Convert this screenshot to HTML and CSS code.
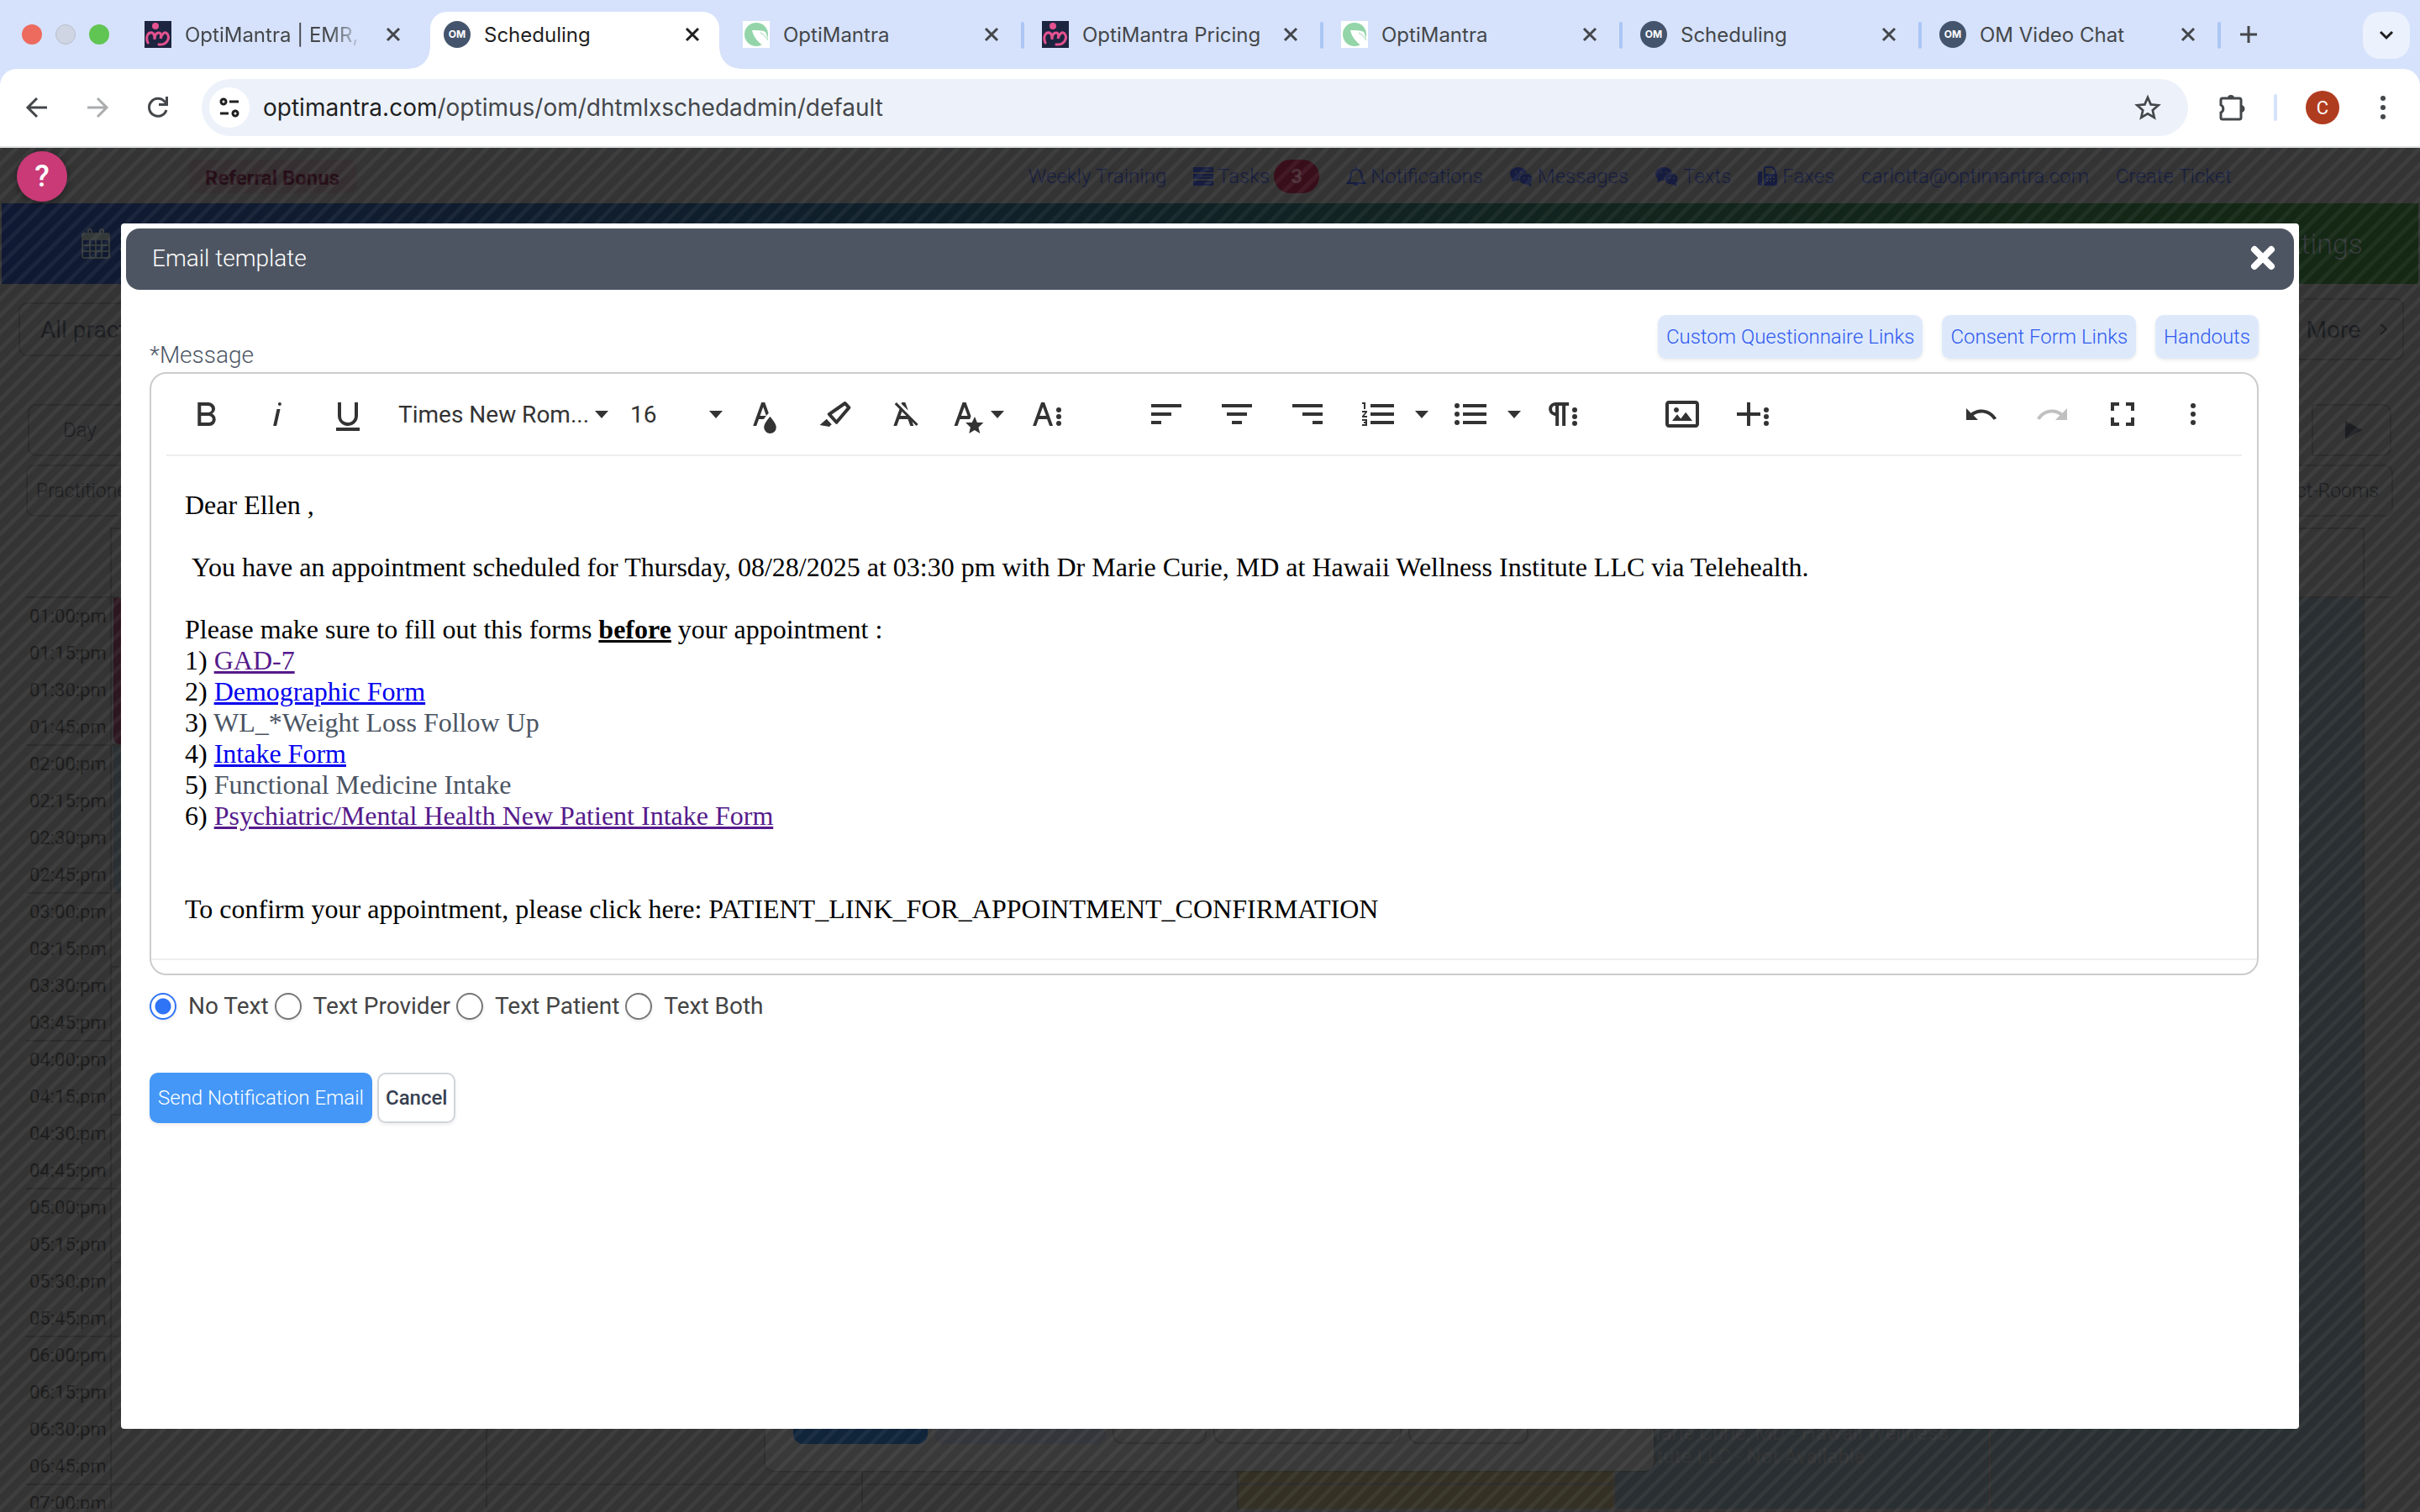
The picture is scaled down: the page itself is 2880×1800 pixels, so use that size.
FILE: index.html
```html
<!DOCTYPE html>
<html lang="en">
<head>
  <meta charset="UTF-8">
  <title>Scheduling</title>
  <link rel="stylesheet" href="styles.css">
</head>
<body>
  <!-- Shared icons -->
  <svg class="sprite" aria-hidden="true">
    <symbol id="x" viewBox="0 0 24 24"><path d="M5 5l14 14M19 5L5 19" fill="none" stroke="currentColor" stroke-width="3"/></symbol>
    <symbol id="mantra" viewBox="0 0 32 32">
      <rect width="32" height="32" fill="#1d2440"/>
      <path d="M4 26c-3-7 0-13 5-12 3 1 3 4 3 8 0-5 1-8 5-8 3 0 3 4 2 7 2-6 5-9 8-6 4 6-1 14-10 13" fill="none" stroke="#e4528f" stroke-width="3" stroke-linecap="round"/>
      <circle cx="13" cy="6" r="4" fill="#e4528f"/>
    </symbol>
    <symbol id="leaf" viewBox="0 0 32 32">
      <rect width="32" height="32" fill="#fff"/>
      <circle cx="16" cy="16" r="14" fill="#93d5a9"/>
      <path d="M11 11c6 0 12 0 16 2 2 4 3 9 2 13l-3 5c-7-5-13-11-15-20z" fill="#fff"/>
      <path d="M21 14c4 2 7 5 9 9" stroke="#93d5a9" stroke-width="1" fill="none"/>
    </symbol>
    <symbol id="chat" viewBox="0 0 28 24">
      <ellipse cx="10" cy="9" rx="10" ry="8"/><path d="M3 13l-1 6 7-3z"/>
      <ellipse cx="19" cy="15" rx="8" ry="7" stroke="#343434" stroke-width="1"/><path d="M24 19l2 5-7-3z"/>
      <circle cx="7" cy="7" r="1" fill="#343434"/><circle cx="13" cy="7" r="1" fill="#343434"/>
      <circle cx="17" cy="14" r="1" fill="#343434"/><circle cx="22" cy="14" r="1" fill="#343434"/>
    </symbol>
  </svg>

  <!-- Browser tabs -->
  <div class="tab-strip">
    <div class="lights"><span class="light red"></span><span class="light gray"></span><span class="light green"></span></div>
    <div class="tab"><svg class="favicon"><use href="#mantra"/></svg><span class="tab-title fade">OptiMantra | EMR, C</span><button class="tab-close" aria-label="Close tab"><svg><use href="#x"/></svg></button></div>
    <div class="tab active"><span class="favicon om">OM</span><span class="tab-title">Scheduling</span><button class="tab-close" aria-label="Close tab"><svg><use href="#x"/></svg></button></div>
    <div class="tab line"><svg class="favicon"><use href="#leaf"/></svg><span class="tab-title">OptiMantra</span><button class="tab-close" aria-label="Close tab"><svg><use href="#x"/></svg></button></div>
    <div class="tab line"><svg class="favicon"><use href="#mantra"/></svg><span class="tab-title">OptiMantra Pricing</span><button class="tab-close" aria-label="Close tab"><svg><use href="#x"/></svg></button></div>
    <div class="tab line"><svg class="favicon"><use href="#leaf"/></svg><span class="tab-title">OptiMantra</span><button class="tab-close" aria-label="Close tab"><svg><use href="#x"/></svg></button></div>
    <div class="tab line"><span class="favicon om">OM</span><span class="tab-title">Scheduling</span><button class="tab-close" aria-label="Close tab"><svg><use href="#x"/></svg></button></div>
    <div class="tab line"><span class="favicon om">OM</span><span class="tab-title">OM Video Chat</span><button class="tab-close" aria-label="Close tab"><svg><use href="#x"/></svg></button></div>
    <button class="new-tab" aria-label="New tab"><svg viewBox="0 0 24 24"><path d="M12 2v20M2 12h20" stroke="currentColor" stroke-width="3"/></svg></button>
    <button class="tab-search" aria-label="Search tabs"><svg viewBox="0 0 20 20"><path d="M3 6l7 7 7-7" fill="none" stroke="currentColor" stroke-width="3"/></svg></button>
  </div>

  <!-- Address bar -->
  <div class="toolbar">
    <div class="nav-btns">
      <button aria-label="Back"><svg viewBox="0 0 32 32"><path d="M28 16H5M16 5L5 16l11 11" fill="none" stroke="currentColor" stroke-width="3"/></svg></button>
      <button class="off" aria-label="Forward"><svg viewBox="0 0 32 32"><path d="M4 16h23M16 5l11 11-11 11" fill="none" stroke="currentColor" stroke-width="3"/></svg></button>
      <button aria-label="Reload"><svg viewBox="0 0 32 32"><path d="M26 19a10.500 10.500 0 1 1-2-10l3 3" fill="none" stroke="currentColor" stroke-width="3"/><path d="M28 3v11H17v-3h8V3z" fill="currentColor"/></svg></button>
    </div>
    <div class="omnibox">
      <button class="site-info" aria-label="Site information"><svg viewBox="0 0 28 28"><g fill="none" stroke="currentColor" stroke-width="3"><circle cx="7" cy="7" r="3"/><path d="M14 7h11M3 21h10"/><circle cx="21" cy="21" r="3"/></g></svg></button>
      <span class="url"><b>optimantra.com</b>/optimus/om/dhtmlxschedadmin/default</span>
      <button class="star" aria-label="Bookmark"><svg viewBox="0 0 32 32"><path d="M16 4l3.600 8.400 9 .8-6.800 6 2 8.800-7.800-4.700L8.200 28l2-8.800-6.800-6 9-.8z" fill="none" stroke="currentColor" stroke-width="2.700"/></svg></button>
    </div>
    <button class="ext" aria-label="Extensions"><svg viewBox="0 0 36 36"><path d="M5 9q0-2 2-2h20q2 0 2 2v21q0 2-2 2H7q-2 0-2-2v-6a5 5 0 0 0 0-9z" fill="none" stroke="currentColor" stroke-width="3"/><path d="M13 7a4 4 0 0 1 8 0zM29 15a4 4 0 0 1 0 9z" fill="currentColor"/></svg></button>
    <span class="tool-line"></span>
    <button class="avatar">C</button>
    <button class="menu" aria-label="Menu"><svg viewBox="0 0 8 32"><circle cx="4" cy="5" r="3"/><circle cx="4" cy="16" r="3"/><circle cx="4" cy="27" r="3"/></svg></button>
  </div>

  <div class="page">
    <!-- Top links -->
    <div class="top-links">
      <a class="referral" href="#">Referral Bonus</a>
      <a href="#">Weekly Training</a>
      <a href="#"><svg viewBox="0 0 24 24"><path d="M0 1h24v6H0zM0 9h24v6H0zM0 17h24v6H0z"/><path d="M15 4h7M8 12h14M13 20h9" stroke="#343434" stroke-width="1"/></svg>Tasks<span class="count">3</span></a>
      <a href="#"><svg viewBox="0 0 24 24"><path d="M2 20c4-4 3-8 4-12 1-3 3-4 6-4s5 1 6 4c1 4 0 8 4 12zM12 4V1" fill="none" stroke="currentColor" stroke-width="2"/><path d="M9 21h6c-1 3-5 3-6 0z"/></svg>Notifications</a>
      <a href="#"><svg class="wide"><use href="#chat"/></svg>Messages</a>
      <a href="#"><svg class="wide"><use href="#chat"/></svg>Texts</a>
      <a href="#"><svg viewBox="0 0 24 24"><path d="M0 6h5v17H2q-2 0-2-2z"/><path d="M8 10V1h9l4 4v5" fill="none" stroke="currentColor" stroke-width="2"/><path d="M7 9h16v12q0 2-2 2H7z"/><path d="M10 13h10M10 17h10" stroke="#343434" stroke-width="2" stroke-dasharray="2 2"/></svg>Faxes</a>
      <a href="#">carlotta@optimantra.com</a>
      <a href="#">Create Ticket</a>
    </div>

    <nav class="main-nav">
      <a href="#"><svg viewBox="0 0 34 36"><path d="M2 6h30v8H2z"/><g fill="none" stroke="currentColor" stroke-width="2"><rect x="1" y="6" width="32" height="29" rx="2"/><path d="M1 20h32M1 27h32M10 13v22M17 13v22M24 13v22"/><rect x="8" y="1" width="4" height="9" rx="2"/><rect x="22" y="1" width="4" height="9" rx="2"/></g></svg>Schedule</a>
      <a href="#">Settings</a>
    </nav>

    <div class="filter-row">
      <div class="box practice">All practitioners</div>
      <div class="box more">More <svg viewBox="0 0 12 20"><path d="M2 4l7 6-7 6" fill="none" stroke="currentColor" stroke-width="2"/></svg></div>
    </div>
    <div class="view-row">
      <button class="box day">Day</button>
      <button class="box next" aria-label="Next"><svg viewBox="0 0 20 22"><path d="M0 0l20 11L0 22z"/></svg></button>
    </div>
    <div class="resource-row">
      <button class="box">Practitioners</button>
      <button class="box">Pract-Rooms</button>
    </div>

    <!-- Scheduler grid -->
    <div class="scheduler">
      <div class="sched-head"></div>
      <div class="sched-body">
        <div class="times">
          <span>01:00:pm</span><span>01:15:pm</span><span>01:30:pm</span><span>01:45:pm</span>
          <span>02:00:pm</span><span>02:15:pm</span><span>02:30:pm</span><span>02:45:pm</span>
          <span>03:00:pm</span><span>03:15:pm</span><span>03:30:pm</span><span>03:45:pm</span>
          <span>04:00:pm</span><span>04:15:pm</span><span>04:30:pm</span><span>04:45:pm</span>
          <span>05:00:pm</span><span>05:15:pm</span><span>05:30:pm</span><span>05:45:pm</span>
          <span>06:00:pm</span><span>06:15:pm</span><span>06:30:pm</span><span>06:45:pm</span>
          <span>07:00:pm</span>
        </div>
        <div class="col"><div class="event booked"></div><div class="event open"></div></div>
        <div class="col"></div>
        <div class="col"></div>
        <div class="col gold"></div>
        <div class="col blocked"><p class="note">Dr Marie Curie, MD - Hawaii Wellness<br>Institute LLC - Not Available</p></div>
        <div class="col blocked"></div>
      </div>
    </div>

    <!-- Appointment popup, behind the dialog -->
    <div class="popup">
      <span class="pop-btn save"></span><span class="pop-btn soft"></span><span class="pop-btn p1"></span><span class="pop-btn p2"></span><span class="pop-btn p3"></span>
    </div>

    <div class="overlay"></div>
    <button class="help">?</button>

    <!-- Email template dialog -->
    <div class="dialog" role="dialog" aria-labelledby="dialogTitle">
      <div class="dialog-title">
        <span id="dialogTitle">Email template</span>
        <button class="dialog-close" aria-label="Close"><svg viewBox="0 0 30 30"><path d="M5 5l20 20M25 5L5 25" stroke="#fff" stroke-width="8" stroke-linecap="round"/></svg></button>
      </div>
      <div class="dialog-body">
        <div class="message-head">
          <span class="message-label" id="messageLabel">*Message</span>
          <div class="link-buttons">
            <button>Custom Questionnaire Links</button>
            <button>Consent Form Links</button>
            <button>Handouts</button>
          </div>
        </div>

        <div class="editor">
          <div class="editor-tools">
            <button aria-label="Bold"><svg viewBox="0 0 24 24"><path d="M15.250,11.800h0A3.680,3.680,0,0,0,17,9a3.930,3.930,0,0,0-3.860-4H6.650V19h7a3.740,3.740,0,0,0,3.700-3.780V15.100A3.640,3.640,0,0,0,15.250,11.800ZM8.650,7h4.200a2.090,2.090,0,0,1,2,1.300,2.090,2.090,0,0,1-1.370,2.610,2.230,2.230,0,0,1-.63.09H8.650Zm4.600,10H8.650V13h4.600a2.090,2.090,0,0,1,2,1.300,2.090,2.090,0,0,1-1.370,2.610A2.230,2.230,0,0,1,13.250,17Z"/></svg></button>
            <button aria-label="Italic"><svg viewBox="0 0 24 24"><path d="M11.760,9h2l-2.200,10h-2Zm1.680-4a1,1,0,1,0,1,1,1,1,0,0,0-1-1Z"/></svg></button>
            <button aria-label="Underline"><svg viewBox="0 0 24 24"><path d="M19,20v2H5V20Zm-3-6.785a4,4,0,0,1-5.740,3.400A3.750,3.750,0,0,1,8,13.085V5.005H6v8.210a6,6,0,0,0,8,5.440,5.851,5.851,0,0,0,4-5.650v-8H16Z"/></svg></button>
            <label class="pick family"><select aria-label="Font family"><option>Times New Rom...</option></select><i class="caret"></i></label>
            <label class="pick size"><select aria-label="Font size"><option>16</option></select><i class="caret"></i></label>
            <button aria-label="Text color"><svg viewBox="0 0 24 24"><path d="M15.200,13.494s-3.600,3.900-3.600,6.300a3.650,3.650,0,0,0,7.300.1v-.1C18.900,17.394,15.200,13.494,15.200,13.494Zm-1.470-1.357.669-.724L12.100,5h-2l-5,14h2l1.430-4h2.943A24.426,24.426,0,0,1,13.726,12.137ZM11.100,7.800l1.860,5.200H9.244Z"/></svg></button>
            <button aria-label="Background color"><svg viewBox="0 0 24 24"><path d="M9.918,12.241l7.748-5.390,1.179,1.296-6.094,7.207L9.918,12.241M7.587,12.652l4.535,4.983a.934.934,0,0,0,1.395-.091L20.969,8.731A.908.908,0,0,0,20.991,7.533l-2.513-2.761a.908.908,0,0,0-1.195-.091L7.809,11.271A.934.934,0,0,0,7.587,12.652ZM2.794,18.528,8.411,19.500l1.479-1.346-3.029-3.328Z"/></svg></button>
            <button aria-label="Clear formatting"><svg viewBox="0 0 24 24"><path d="M11.480,10.090l-1.200-1.210L8.800,7.410,6.430,5,5.370,6.100,8.250,9,4.660,19h2l1.430-4h5.140l1.430,4h2l-.89-2.510L18.270,19l1.070-1.060L14.590,13.200ZM8.800,13l.92-2.560L12.270,13Zm.56-7.150L9.660,5h2l1.750,4.900Z"/></svg></button>
            <button class="styles" aria-label="Inline style"><svg viewBox="0 0 24 24"><path d="M11.880,15h.7l.7-1.700-3-8.300h-2l-5,14h2l1.400-4Zm-4.400-2,1.900-5.200,1.900,5.200ZM15.400,21.545l3.246,1.949-.909-3.637L20.720,17H16.954l-1.429-3.506L13.837,17H10.071l2.857,2.857-.779,3.637Z"/></svg><i class="caret"></i></button>
            <button aria-label="More text"><svg viewBox="0 0 24 24"><path d="M13.550,19h2l-5-14h-2l-5,14h2l1.400-4h5.100Zm-5.900-6,1.900-5.200,1.900,5.200Z"/><circle cx="19" cy="9.500" r="1.500"/><circle cx="19" cy="13.500" r="1.500"/><circle cx="19" cy="17.500" r="1.500"/></svg></button>
            <span class="tools-gap"></span>
            <button aria-label="Align left"><svg viewBox="0 0 24 24"><path d="M3,8H21V6H3Zm0,10H9V16H3Zm0-5H15V11H3Z"/></svg></button>
            <button aria-label="Align center"><svg viewBox="0 0 24 24"><path d="M3,8H21V6H3Zm6,10h6V16H9Zm-3-5H18V11H6Z"/></svg></button>
            <button aria-label="Align right"><svg viewBox="0 0 24 24"><path d="M3,8H21V6H3Zm12,10h6V16H15Zm-6-5H21V11H9Z"/></svg></button>
            <button class="list" aria-label="Ordered list"><svg viewBox="0 0 24 24"><path d="M2.500,16h2v.5h-1v1h1V18h-2v1h3V15h-3Zm1-7h1V5h-2V6h1Zm-1,2H4.300L2.500,13.100V14h3V13H3.700l1.800-2.100V10h-3Zm5-5V8h14V6Zm0,12h14V16H7.500Zm0-5h14V11H7.500Z"/></svg><i class="caret"></i></button>
            <button class="list" aria-label="Unordered list"><svg viewBox="0 0 24 24"><circle cx="4" cy="7" r="1.500"/><circle cx="4" cy="12" r="1.500"/><circle cx="4" cy="17" r="1.500"/><path d="M7.500,6V8h14V6Zm0,12h14V16H7.500Zm0-5h14V11H7.500Z"/></svg><i class="caret"></i></button>
            <button aria-label="More paragraph"><svg viewBox="0 0 24 24"><path d="M7.682,5a4.110,4.110,0,0,0-4.070,3.180,4,4,0,0,0,3.110,4.725h0l.027.005a3.766,3.766,0,0,0,.82.09v6h2V7h2V19h2V7h2V5ZM5.532,9a2,2,0,0,1,2-2v4A2,2,0,0,1,5.532,9Z"/><circle cx="19" cy="9.500" r="1.500"/><circle cx="19" cy="13.500" r="1.500"/><circle cx="19" cy="17.500" r="1.500"/></svg></button>
            <span class="tools-gap"></span>
            <button aria-label="Insert image"><svg viewBox="0 0 24 24"><path d="M14.200,11l3.800,5H6l3-3.900l2.100,2.700L14,11H14.200z M8.500,11c0.800,0,1.500-0.700,1.500-1.500S9.300,8,8.500,8S7,8.700,7,9.500C7,10.300,7.700,11,8.500,11z M22,6v12c0,1.100-0.900,2-2,2H4c-1.100,0-2-0.900-2-2V6c0-1.100,0.900-2,2-2h16C21.100,4,22,4.900,22,6z M20,8.800V6H4v12h16V8.800z"/></svg></button>
            <button aria-label="More rich"><svg viewBox="0 0 24 24"><path d="M16.500,13h-6v6h-2V13h-6V11h6V5h2v6h6Z"/><circle cx="20" cy="9.500" r="1.500"/><circle cx="20" cy="13.500" r="1.500"/><circle cx="20" cy="17.500" r="1.500"/></svg></button>
            <button class="undo" aria-label="Undo"><svg viewBox="0 0 24 24"><path d="M10.400,9.400c-1.700,0.300-3.200,0.900-4.600,2L3,8.500v7h7l-2.700-2.700c3.700-2.600,8.800-1.800,11.500,1.900c0.200,0.200,0.300,0.500,0.500,0.700l1.800-0.900C18.700,10.800,14.600,8.700,10.400,9.400z"/></svg></button>
            <button class="disabled" aria-label="Redo"><svg viewBox="0 0 24 24"><path d="M13.600,9.400c1.700,0.300,3.200,0.900,4.600,2L21,8.500v7h-7l2.700-2.700C13,10.100,7.900,11,5.300,14.700c-0.200,0.200-0.300,0.500-0.500,0.700L3,14.500C5.300,10.800,9.400,8.700,13.600,9.400z"/></svg></button>
            <button aria-label="Fullscreen"><svg viewBox="0 0 24 24"><path d="M7,14H5v5h5V17H7ZM5,10H7V7h3V5H5Zm12,7H14v2h5V14H17ZM14,5V7h3v3h2V5Z"/></svg></button>
            <button aria-label="More misc"><svg viewBox="0 0 24 24"><circle cx="12" cy="7" r="1.500"/><circle cx="12" cy="12" r="1.500"/><circle cx="12" cy="17" r="1.500"/></svg></button>
          </div>
          <div class="editor-text" contenteditable="true" spellcheck="false" role="textbox" aria-labelledby="messageLabel">
            <p>Dear Ellen ,</p>
            <p>&nbsp;You have an appointment scheduled for Thursday, 08/28/2025 at 03:30 pm with Dr Marie Curie, MD at Hawaii Wellness Institute LLC via Telehealth.</p>
            <p>Please make sure to fill out this forms <b><u>before</u></b> your appointment :<br>
              1) <a class="visited" href="#">GAD-7</a><br>
              2) <a href="#">Demographic Form</a><br>
              3) <span class="plain">WL_*Weight Loss Follow Up</span><br>
              4) <a href="#">Intake Form</a><br>
              5) <span class="plain">Functional Medicine Intake</span><br>
              6) <a class="visited" href="#">Psychiatric/Mental Health New Patient Intake Form</a><br><br></p>
            <p>To confirm your appointment, please click here: PATIENT_LINK_FOR_APPOINTMENT_CONFIRMATION</p>
          </div>
          <div class="editor-foot"></div>
        </div>

        <div class="text-options">
          <input type="radio" name="text" id="noText" checked><label for="noText">No Text</label>
          <input type="radio" name="text" id="textProvider"><label for="textProvider">Text Provider</label>
          <input type="radio" name="text" id="textPatient"><label for="textPatient">Text Patient</label>
          <input type="radio" name="text" id="textBoth"><label for="textBoth">Text Both</label>
        </div>
        <div class="actions">
          <button class="send">Send Notification Email</button>
          <button class="cancel">Cancel</button>
        </div>
      </div>
    </div>
  </div>
</body>
</html>
```
FILE: styles.css
```css
* {
  box-sizing: border-box;
}
body {
  margin: 0;
  height: 100vh;
  display: flex;
  flex-direction: column;
  overflow: hidden;
  background: #d6e2fb;
  font-family: Roboto, "Liberation Sans", sans-serif;
}
button {
  font: inherit;
  color: inherit;
  border: 0;
  padding: 0;
  background: none;
  cursor: pointer;
}
a {
  text-decoration: none;
}
svg {
  display: block;
  fill: currentColor;
  flex: none;
}
.sprite {
  display: none;
}

/* Browser window */
.tab-strip {
  display: flex;
  align-items: center;
  height: 82px;
  font-family: Inter, sans-serif;
  font-size: 24px;
  color: #44474a;
}
.lights {
  display: flex;
  gap: 16px;
  width: 156px;
  padding-left: 26px;
}
.light {
  width: 24px;
  height: 24px;
  border-radius: 50%;
}
.red {
  background: #ec6a5e;
}
.gray {
  background: #cfd5e2;
  border: 1px solid #b9bfcc;
}
.green {
  background: #61c554;
}
.tab {
  position: relative;
  display: flex;
  align-items: center;
  width: 356px;
  height: 82px;
  padding: 0 32px 0 16px;
}
.line::after {
  content: "";
  position: absolute;
  right: 5px;
  top: 26px;
  width: 4px;
  height: 32px;
  border-radius: 2px;
  background: #abc6f5;
}
.active {
  width: 344px;
  height: 68px;
  margin: 14px 12px 0 0;
  padding: 0 20px 14px 16px;
  background: #fff;
  border-radius: 20px 20px 0 0;
  color: #1f1f1f;
}
.active::before,
.active::after {
  content: "";
  position: absolute;
  bottom: 0;
  width: 24px;
  height: 24px;
}
.active::before {
  right: 100%;
  background: radial-gradient(circle at 0 0, transparent 23px, #fff 24px);
}
.active::after {
  left: 100%;
  background: radial-gradient(circle at 100% 0, transparent 23px, #fff 24px);
}
.favicon {
  width: 32px;
  height: 32px;
  margin-right: 16px;
}
.om {
  border-radius: 50%;
  background: #44546c;
  color: #fff;
  font-size: 12px;
  font-weight: 700;
  line-height: 32px;
  text-align: center;
}
.tab-title {
  flex: 1;
  overflow: hidden;
  white-space: nowrap;
}
.fade {
  margin-right: 22px;
  -webkit-mask-image: linear-gradient(to right, #000 80%, transparent);
  mask-image: linear-gradient(to right, #000 80%, transparent);
}
.tab-close svg,
.new-tab svg {
  width: 24px;
  height: 24px;
}
.new-tab {
  margin-left: 16px;
}
.tab-search {
  display: grid;
  place-items: center;
  width: 56px;
  height: 56px;
  margin: 2px 12px 0 auto;
  border-radius: 20px;
  background: #ebf1fd;
  color: #1f1f1f;
}
.tab-search svg {
  width: 20px;
  height: 20px;
}
.toolbar {
  display: flex;
  align-items: center;
  height: 94px;
  padding: 0 40px 0 28px;
  background: #fff;
  border-bottom: 2px solid #dfe2e4;
  border-radius: 20px 20px 0 0;
  color: #44474a;
}
.nav-btns {
  display: flex;
  gap: 40px;
  margin-right: 36px;
}
.nav-btns svg,
.star svg {
  width: 32px;
  height: 32px;
}
.off {
  color: #aaacae;
}
.omnibox {
  display: flex;
  align-items: center;
  flex: 1;
  height: 68px;
  margin-right: 34px;
  padding: 0 32px 0 9px;
  border-radius: 34px;
  background: #edf2fa;
  font-family: Inter, sans-serif;
  font-size: 28px;
}
.site-info {
  display: grid;
  place-items: center;
  width: 48px;
  height: 48px;
  margin-right: 16px;
  border-radius: 50%;
  background: #fff;
  color: #1f1f1f;
}
.site-info svg {
  width: 28px;
  height: 28px;
}
.url {
  flex: 1;
}
.url b {
  font-weight: 400;
  color: #1f1f1f;
}
.ext svg {
  width: 36px;
  height: 36px;
}
.tool-line {
  width: 4px;
  height: 32px;
  margin: 0 34px 0 32px;
  border-radius: 2px;
  background: #d6e2fb;
}
.avatar {
  width: 40px;
  height: 40px;
  margin-right: 48px;
  border-radius: 50%;
  background: #b03c1f;
  color: #fff;
  font-size: 22px;
}
.menu svg {
  width: 8px;
  height: 32px;
}

/* Scheduling page under the overlay */
.page {
  position: relative;
  flex: 1;
  min-height: 0;
  display: flex;
  flex-direction: column;
  overflow: hidden;
  background: #343434;
  color: #1b1d21;
  font-size: 24px;
}
.top-links {
  display: flex;
  align-items: center;
  gap: 32px;
  height: 66px;
  padding: 2px 224px 0 225px;
  font-weight: 300;
}
.top-links a {
  display: flex;
  align-items: center;
  gap: 5px;
  color: #151c40;
}
.top-links svg {
  width: 24px;
  height: 24px;
}
.top-links .wide {
  width: 28px;
}
.top-links .referral {
  margin-right: auto;
  padding: 8px 20px 4px 19px;
  border-radius: 10px;
  background: #352f31;
  color: #260e18;
  font-weight: 700;
}
.count {
  width: 54px;
  border-radius: 20px;
  background: #390e1b;
  color: #4a3038;
  font-weight: 700;
  line-height: 40px;
  text-align: center;
}
.main-nav {
  display: flex;
  align-items: center;
  justify-content: space-between;
  height: 96px;
  margin: 0 2px;
  padding: 0 66px 0 95px;
  background: linear-gradient(to right, #101933, #0f2029 40%, #12241e 65%, #142813);
  font-size: 34px;
  font-weight: 300;
}
.main-nav a {
  display: flex;
  align-items: center;
  gap: 10px;
  color: #34393a;
}
.main-nav svg {
  width: 34px;
  height: 36px;
}
.box {
  display: flex;
  align-items: center;
  border: 2px solid #2b2c2d;
  border-radius: 10px;
}
.filter-row {
  display: flex;
  align-items: center;
  justify-content: space-between;
  margin: 17px 19px 0 22px;
  font-size: 28px;
}
.practice {
  width: 500px;
  height: 64px;
  padding-left: 24px;
}
.more {
  gap: 22px;
  height: 74px;
  padding: 0 16px 0 40px;
}
.more svg {
  width: 12px;
  height: 20px;
}
.view-row,
.resource-row {
  display: flex;
  justify-content: space-between;
  height: 62px;
  font-weight: 300;
}
.view-row {
  margin: 52px 34px 0 33px;
}
.day {
  width: 200px;
  padding-left: 40px;
}
.next {
  width: 95px;
  padding-left: 38px;
  border-radius: 0 10px 10px 0;
}
.next svg {
  width: 20px;
  height: 22px;
}
.resource-row {
  margin: 10px 32px 0 31px;
  font-size: 23px;
}
.resource-row .box {
  padding: 0 15px 0 10px;
}
.scheduler {
  flex: 1;
  min-height: 0;
  margin: 13px 32px 4px 31px;
  overflow: hidden;
}
.sched-head {
  height: 82px;
  margin: 0 34px 0 100px;
  border: 2px solid #2b2b2b;
  border-bottom: 0;
}
.sched-body {
  display: grid;
  grid-template-columns: 100px repeat(6, 1fr);
  padding-right: 34px;
  border-top: 2px solid #2b2b2b;
}
.times {
  background: repeating-linear-gradient(to bottom, transparent 0 174px, #2b2b2b 174px 176px);
}
.times span {
  display: block;
  height: 44px;
  padding-left: 4px;
  font-size: 22px;
  line-height: 44px;
  color: #1c1c1c;
}
.col {
  border-left: 2px solid #2b2b2b;
  background: repeating-linear-gradient(to bottom, transparent 0 86px, #2d2d2d 86px 88px);
}
.col:last-child {
  border-right: 2px solid #2b2b2b;
}
.gold {
  background-color: #343024;
}
.blocked {
  background: #292f32;
  border-left-color: #35302e;
}
.event {
  height: 174px;
  margin: 0 10px 2px 2px;
  border-radius: 0 0 8px 8px;
}
.booked {
  background: #2c1720;
}
.open {
  background: #292f32;
}
.note {
  margin: 980px 0 0;
  padding-left: 4px;
  line-height: 28px;
  color: #343434;
}
.popup {
  position: absolute;
  left: 911px;
  bottom: 49px;
  display: flex;
  align-items: flex-end;
  gap: 8px;
  width: 1057px;
  height: 600px;
  padding: 0 32px 32px 33px;
  border-radius: 10px;
  background: #393939;
  box-shadow: 0 0 3px #222;
}
.pop-btn {
  height: 60px;
  border: 2px solid #303030;
  border-radius: 12px;
}
.save {
  width: 160px;
  border: 0;
  background: #10243a;
}
.soft {
  width: 204px;
  border: 0;
  background: #34363b;
}
.p1 {
  width: 112px;
}
.p2 {
  width: 224px;
}
.p3 {
  width: 143px;
}
.overlay {
  position: absolute;
  inset: 0;
  background: linear-gradient(135deg, rgba(255,255,255,.05) 0 6%, transparent 11% 39%, rgba(255,255,255,.05) 44% 56%, transparent 61% 89%, rgba(255,255,255,.05) 94% 100%) 0 0 / 20px 20px;
}
.help {
  position: absolute;
  left: 20px;
  top: 4px;
  width: 60px;
  height: 60px;
  border-radius: 50%;
  background: #c93a77;
  box-shadow: 0 2px 8px rgba(0,0,0,.4);
  color: #fff;
  font-size: 36px;
  font-weight: 500;
}

/* Dialog */
.dialog {
  position: absolute;
  inset: 90px 5% 99px;
  padding: 6px;
  border-radius: 4px;
  background: #fff;
}
.dialog-title {
  display: flex;
  align-items: center;
  justify-content: space-between;
  height: 73px;
  padding: 0 22px 3px 31px;
  border-radius: 16px;
  background: #4e5562;
  color: #fff;
  font-size: 28px;
  font-weight: 300;
}
.dialog-close svg {
  width: 30px;
  height: 30px;
}
.dialog-body {
  padding: 30px 42px 0 28px;
}
.message-head {
  display: flex;
  justify-content: space-between;
  height: 68px;
}
.message-label {
  padding-top: 31px;
  color: #4d5666;
  font-size: 28px;
  font-weight: 300;
  line-height: 33px;
}
.link-buttons {
  display: flex;
  gap: 23px;
}
.link-buttons button {
  height: 52px;
  padding: 0 10px;
  border-radius: 10px;
  background: #dde9fb;
  box-shadow: 0 2px 4px rgba(0,0,0,.08);
  color: #2f5af0;
  font-weight: 300;
}
.editor {
  border: 2px solid #ccc;
  border-radius: 20px;
  overflow: hidden;
}
.editor-tools {
  display: flex;
  align-items: center;
  height: 98px;
  margin: 0 18px;
  padding: 0 16px 0 6px;
  border-bottom: 2px solid #eee;
  color: #333;
}
.editor-tools button {
  display: flex;
  align-items: center;
  justify-content: center;
  width: 84px;
  height: 76px;
}
.editor-tools svg {
  width: 48px;
  height: 48px;
}
.editor-tools .styles {
  gap: 2px;
}
.editor-tools .list {
  width: 110px;
  padding-left: 10px;
  gap: 20px;
}
.editor-tools .undo {
  margin-left: auto;
}
.disabled {
  opacity: .3;
}
.tools-gap {
  width: 58px;
}
.pick {
  display: flex;
  align-items: center;
  padding: 0 9px 0 18px;
}
.family {
  width: 277px;
}
.size {
  width: 135px;
  padding-right: 8px;
  padding-left: 17px;
}
.pick select {
  flex: 1;
  min-width: 0;
  border: 0;
  padding: 0;
  appearance: none;
  background: none;
  color: #333;
  font: 28px Roboto, sans-serif;
}
.caret {
  border: 8px solid transparent;
  border-top: 9px solid #333;
  border-bottom: 0;
}
.editor-text {
  padding: 40px;
  height: 598px;
  outline: 0;
  color: #000;
  font-family: "Liberation Serif", serif;
  font-size: 32px;
  line-height: 37px;
}
.editor-text p {
  margin: 0 0 37px;
}
.editor-text a {
  color: #0000ee;
  text-decoration: underline;
}
.editor-text .visited {
  color: #551a8b;
}
.plain {
  color: #4b5563;
}
.editor-foot {
  height: 18px;
  border-top: 2px solid #eee;
}
.text-options {
  display: flex;
  align-items: center;
  margin-top: 20px;
  color: #444;
  font-size: 28px;
  line-height: 34px;
}
.text-options input {
  appearance: none;
  width: 32px;
  height: 32px;
  margin: 0 14px 0 0;
  border: 2px solid #767676;
  border-radius: 50%;
  box-shadow: 0 2px 4px rgba(0,0,0,.08);
}
.text-options input:checked {
  border-color: #2f73f6;
  background: radial-gradient(circle, #2f73f6 9px, #fff 10px);
}
.text-options label {
  margin-right: 7px;
}
.actions {
  display: flex;
  gap: 6px;
  margin-top: 62px;
}
.actions button {
  height: 60px;
  padding: 0 10px;
  border-radius: 10px;
  box-shadow: 0 2px 4px rgba(0,0,0,.08);
}
.send {
  background: #4497f7;
  color: #fff;
  font-weight: 300;
}
.actions .cancel {
  border: 2px solid #d1d5db;
  padding: 0 8px;
  color: #374151;
  font-weight: 500;
}
```
